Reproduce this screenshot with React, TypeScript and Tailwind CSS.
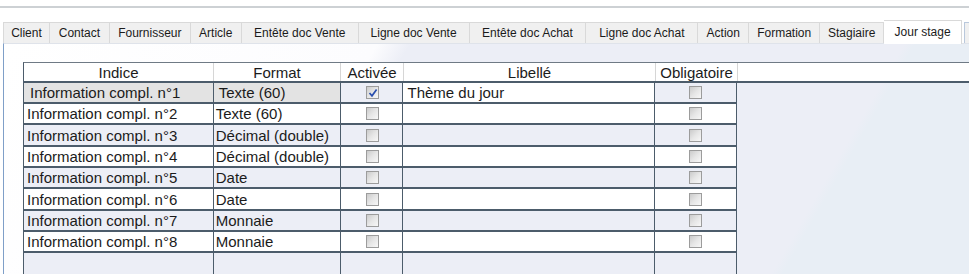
import React from 'react';

const tabs = [
  { label: 'Client', w: 'w-[47px]' },
  { label: 'Contact', w: 'w-[60px]' },
  { label: 'Fournisseur', w: 'w-[81px]' },
  { label: 'Article', w: 'w-[51px]' },
  { label: 'Entête doc Vente', w: 'w-[117px]' },
  { label: 'Ligne doc Vente', w: 'w-[111px]' },
  { label: 'Entête doc Achat', w: 'w-[117px]' },
  { label: 'Ligne doc Achat', w: 'w-[112px]' },
  { label: 'Action', w: 'w-[51px]' },
  { label: 'Formation', w: 'w-[71px]' },
  { label: 'Stagiaire', w: 'w-[64px]' },
];

const rows = [
  { format: 'Texte (60)', on: true, label: 'Thème du jour', h: 'h-[21px]' },
  { format: 'Texte (60)', on: false, label: '', h: 'h-[21px]' },
  { format: 'Décimal (double)', on: false, label: '', h: 'h-[22px]' },
  { format: 'Décimal (double)', on: false, label: '', h: 'h-[21px]' },
  { format: 'Date', on: false, label: '', h: 'h-[21px]' },
  { format: 'Date', on: false, label: '', h: 'h-[22px]' },
  { format: 'Monnaie', on: false, label: '', h: 'h-[21px]' },
  { format: 'Monnaie', on: false, label: '', h: 'h-[21px]' },
];

function Check({ checked }: { checked: boolean }) {
  return (
    <div className="w-[13px] h-[13px] border border-[#9c9c9c] bg-[linear-gradient(135deg,#cbcbcb_0%,#e6e6e6_50%,#f7f7f7_100%)] flex items-center justify-center">
      {checked && (
        <svg width="10" height="10" viewBox="0 0 10 10">
          <path d="M1.5 5 L4 7.8 L8.6 1.6" fill="none" stroke="#2a4fae" strokeWidth="1.7" />
        </svg>
      )}
    </div>
  );
}

export default function App() {
  return (
    <div className="w-[969px] h-[274px] bg-white overflow-hidden flex flex-col font-['Liberation_Sans',Arial,sans-serif] text-[#1b1b1b]">
      {/* top rule */}
      <div className="h-[6px] shrink-0" />
      <div className="h-[2px] shrink-0 bg-[#cdd1d4]" />
      <div className="h-[12px] shrink-0" />

      {/* tab strip */}
      <div className="h-[23px] shrink-0 flex items-end pl-[3px] text-[12px]">
        {tabs.map((t, i) => (
          <div
            key={t.label}
            className={`${t.w} h-[21px] flex items-center justify-center bg-[#f0f0f0] border-t border-r border-[#d9d9d9] ${i === 0 ? 'border-l' : ''}`}
          >
            {t.label}
          </div>
        ))}
        <div className="w-[78px] h-[24px] -mb-px flex items-center justify-center bg-white border-t border-r border-[#d9d9d9] z-10 pb-[2px]">
          Jour stage
        </div>
        <div className="w-[5px] h-[21px] ml-[2px] bg-[#f0f0f0] border-t border-l border-[#b9c8dc]" />
      </div>

      {/* panel */}
      <div className="flex-1 min-h-0 ml-[3px] border-l border-t border-l-[#7f9fc8] border-t-[#dfe3ea] bg-[linear-gradient(120deg,#ffffff_0%,#fcfcfe_34%,#eceef6_37%,#eceef6_82%,#e8eef5_83%,#e8eef5_100%)] pt-[18px] pl-[19px] text-[15px] leading-none">
        {/* header */}
        <div className="flex h-[21px] bg-white border-t border-[#6f7a85] border-b-2 border-b-[#4c5c6b] border-l border-l-[#4c5c6b]">
          <div className="w-[190px] flex items-center justify-center border-r border-[#d6d6d6]">Indice</div>
          <div className="w-[127px] flex items-center justify-center border-r border-[#d6d6d6]">Format</div>
          <div className="w-[63px] flex items-center justify-center border-r border-[#d6d6d6]">Activée</div>
          <div className="w-[252px] flex items-center justify-center border-r border-[#d6d6d6]">Libellé</div>
          <div className="w-[82px] flex items-center justify-center border-r border-[#d6d6d6]">Obligatoire</div>
          <div className="flex-1" />
        </div>

        {/* rows */}
        <div className="w-[714px] border-l border-[#4c5c6b]">
          {rows.map((r, i) => {
            const bg = i % 2 === 0 ? 'bg-[#eceef6]' : 'bg-white';
            const sel = i === 0;
            return (
              <div key={i} className={`flex ${r.h} border-b-2 border-[#4c5c6b] ${bg}`}>
                <div className={`w-[190px] flex items-center border-r border-[#4c5c6b] ${sel ? 'bg-[#e3e3e3] pl-[6px]' : 'pl-[3px]'}`}>
                  Information compl. n°{i + 1}
                </div>
                <div className={`w-[127px] flex items-center border-r border-[#4c5c6b] ${sel ? 'bg-[#e3e3e3] pl-[5px]' : 'pl-[2px]'}`}>
                  {r.format}
                </div>
                <div className="w-[63px] flex items-center justify-center border-r border-[#4c5c6b] pl-[2px]">
                  <Check checked={r.on} />
                </div>
                <div className={`w-[252px] flex items-center border-r border-[#4c5c6b] pl-[4px] ${sel ? 'bg-white' : ''}`}>
                  {r.label}
                </div>
                <div className="w-[82px] flex items-center justify-center border-r border-[#4c5c6b]">
                  <Check checked={false} />
                </div>
              </div>
            );
          })}
          <div className="flex h-[24px] bg-[#eceef6]">
            <div className="w-[190px] border-r border-[#4c5c6b]" />
            <div className="w-[127px] border-r border-[#4c5c6b]" />
            <div className="w-[63px] border-r border-[#4c5c6b]" />
            <div className="w-[252px] border-r border-[#4c5c6b]" />
            <div className="w-[82px] border-r border-[#4c5c6b]" />
          </div>
        </div>
      </div>
    </div>
  );
}
